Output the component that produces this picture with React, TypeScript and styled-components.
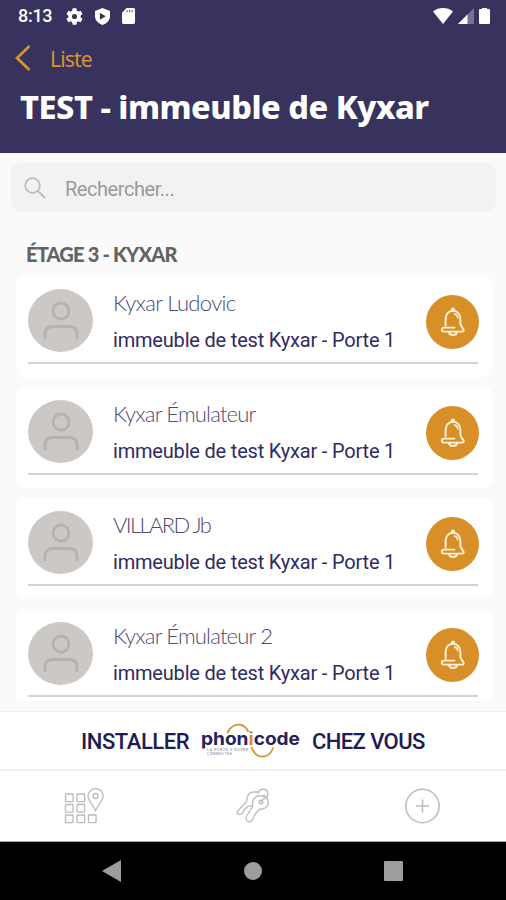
import React from "react";
import styled, { createGlobalStyle } from "styled-components";

const GlobalStyle = createGlobalStyle`
  * { box-sizing: border-box; }
  body { margin: 0; background: #fafafa; }
`;

const Screen = styled.div`
  width: 506px;
  height: 900px;
  display: flex;
  flex-direction: column;
  overflow: hidden;
  background: #fafafa;
  font-family: Roboto, "Liberation Sans", sans-serif;
`;

const Header = styled.header`
  flex: none;
  height: 153px;
  background: #37335e;
  color: #fff;
`;

const StatusBar = styled.div`
  height: 32px;
  padding: 0 16px 0 18px;
  display: flex;
  align-items: center;
  justify-content: space-between;
`;

const StatusGroup = styled.div<{ $gap: number }>`
  display: flex;
  align-items: center;
  gap: ${(p) => p.$gap}px;
`;

const Clock = styled.span`
  width: 36px;
  font-size: 18px;
  font-weight: 500;
  letter-spacing: -0.3px;
  line-height: 20px;
`;

const BackRow = styled.div`
  height: 52px;
  padding-left: 15px;
  display: flex;
  align-items: center;
  gap: 19px;
  color: #d8922f;
`;

const BackLabel = styled.span`
  padding-top: 1px;
  font: 400 21px/28px "Noto Sans", sans-serif;
  letter-spacing: -0.8px;
`;

const Title = styled.h1`
  margin: 0;
  padding: 3px 0 0 20px;
  font: 800 32.5px/40px "Noto Sans", sans-serif;
  letter-spacing: -0.47px;
  white-space: nowrap;
`;

const SearchBox = styled.label`
  flex: none;
  height: 49px;
  margin: 10px 10px 0 11px;
  padding: 0 13px;
  display: flex;
  align-items: center;
  gap: 19px;
  border-radius: 10px;
  background: #f2f2f2;
`;

const SearchText = styled.span`
  padding-top: 2px;
  font-size: 20px;
  line-height: 26px;
  letter-spacing: -0.45px;
  color: #9a9a9a;
`;

const SectionTitle = styled.h2`
  flex: none;
  margin: 0;
  height: 64px;
  padding: 28px 0 0 26px;
  font: 900 20px/28px Lato, sans-serif;
  letter-spacing: -0.8px;
  color: #636363;
  white-space: nowrap;
`;

const List = styled.div`
  flex: none;
  height: 435px;
  padding: 0 14px 10px 16px;
  display: flex;
  flex-direction: column;
`;

const Clip = styled.div`
  height: 425px;
  overflow: hidden;
  display: flex;
  flex-direction: column;
  gap: 10px;
`;

const Card = styled.article`
  flex: none;
  height: 101px;
  padding: 0 14px 0 12px;
  border-radius: 8px;
  background: #fff;
`;

const CardBody = styled.div`
  height: 88px;
  display: flex;
  align-items: center;
  border-bottom: 2px solid #d3d3d3;
`;

const Avatar = styled.div`
  flex: none;
  width: 65px;
  height: 63px;
  margin: 2px 20px 0 0;
  border-radius: 50%;
  background: #cbc8c6;
  display: flex;
  justify-content: center;
`;

const Details = styled.div`
  flex: 1;
  min-width: 0;
  padding-top: 4px;
  color: #302b62;
  white-space: nowrap;
`;

const Name = styled.div<{ $spacing: number }>`
  font: 300 22px/30px Lato, sans-serif;
  letter-spacing: ${(p) => p.$spacing}px;
  color: #4f4b70;
`;

const Address = styled.div`
  margin-top: 7px;
  font-size: 20px;
  line-height: 30px;
  letter-spacing: -0.19px;
`;

const BellButton = styled.button`
  flex: none;
  width: 53px;
  height: 54px;
  margin: 5px -1px 0 0;
  padding: 0;
  border: 0;
  border-radius: 50%;
  background: #d98f27;
  display: flex;
  align-items: center;
  justify-content: center;
`;

const Banner = styled.div`
  flex: none;
  height: 58px;
  padding: 1px 0 0 81px;
  display: flex;
  align-items: center;
  border-top: 1px solid #eeeeee;
  background: #fff;
  color: #211b55;
  white-space: nowrap;
`;

const BannerWord = styled.span<{ $width: number; $indent?: number; $spacing: number }>`
  width: ${(p) => p.$width}px;
  padding: 1px 0 0 ${(p) => p.$indent ?? 0}px;
  font-size: 22px;
  line-height: 30px;
  font-weight: 500;
  letter-spacing: ${(p) => p.$spacing}px;
`;

const TabBar = styled.nav`
  flex: none;
  height: 73px;
  display: grid;
  grid-template-columns: repeat(3, 1fr);
  align-items: center;
  justify-items: center;
  border-top: 2px solid #f1f1f1;
  border-bottom: 1px solid #a8a8a8;
  background: #fff;
`;

const SystemBar = styled.div`
  flex: 1;
  padding: 0 103px 0 102px;
  display: flex;
  align-items: center;
  justify-content: space-between;
  background: #000;
`;

const people = [
  { name: "Kyxar Ludovic", spacing: -0.65 },
  { name: "Kyxar Émulateur", spacing: -0.8 },
  { name: "VILLARD Jb", spacing: -1.6 },
  { name: "Kyxar Émulateur 2", spacing: -0.8 },
];

const GearIcon = () => (
  <svg width="17" height="17" viewBox="2 2 20 20" fill="#fff">
    <path d="M19.14 12.94c.04-.3.06-.61.06-.94s-.02-.64-.07-.94l2.03-1.58a.49.49 0 0 0 .12-.61l-1.92-3.32a.49.49 0 0 0-.59-.22l-2.39.96a7 7 0 0 0-1.62-.94l-.36-2.54a.48.48 0 0 0-.48-.41h-3.84a.47.47 0 0 0-.47.41l-.36 2.54c-.59.24-1.13.57-1.62.94l-2.39-.96a.48.48 0 0 0-.59.22L2.74 8.87a.47.47 0 0 0 .12.61l2.03 1.58a7.5 7.5 0 0 0 0 1.88l-2.03 1.58a.49.49 0 0 0-.12.61l1.92 3.32c.12.22.37.29.59.22l2.39-.96c.5.38 1.03.7 1.62.94l.36 2.54c.05.24.24.41.48.41h3.84c.24 0 .44-.17.47-.41l.36-2.54a7 7 0 0 0 1.62-.94l2.39.96c.22.08.47 0 .59-.22l1.92-3.32a.47.47 0 0 0-.12-.61zM12 15a3 3 0 1 1 0-6 3 3 0 0 1 0 6z" />
  </svg>
);

const ShieldIcon = () => (
  <svg width="15" height="17" viewBox="0 0 16 18">
    <path d="M8 0l8 3v5.5c0 4.3-3.2 8-8 9.5-4.8-1.5-8-5.2-8-9.5V3z" fill="#fff" />
    <path d="M5.2 5v7.4L11.4 8.7z" fill="#37335e" />
  </svg>
);

const CardIcon = () => (
  <svg width="13" height="16" viewBox="0 0 14 17">
    <path d="M5 0h7.5A1.5 1.5 0 0 1 14 1.5v14a1.5 1.5 0 0 1-1.5 1.5h-11A1.5 1.5 0 0 1 0 15.5V5z" fill="#fff" />
    <path d="M5.5 2v2.5M8.2 2v2.5M10.9 2v2.5" stroke="#716e8c" strokeWidth="1.3" />
  </svg>
);

const WifiIcon = () => (
  <svg width="20" height="16" viewBox="0 0 20 16">
    <path d="M0 3.5C5.5-1.1 14.5-1.1 20 3.5L10 16z" fill="#fff" />
  </svg>
);

const SignalIcon = () => (
  <svg width="16" height="16" viewBox="0 0 16 16">
    <path d="M16 0v16H0z" fill="#77748f" />
    <path d="M9.5 6.5V16H0z" fill="#fff" />
  </svg>
);

const BatteryIcon = () => (
  <svg width="11" height="16" viewBox="0 0 11 16">
    <path d="M3 1V0h5v1h2a1 1 0 0 1 1 1v13a1 1 0 0 1-1 1H1a1 1 0 0 1-1-1V2a1 1 0 0 1 1-1z" fill="#fff" />
  </svg>
);

const BackIcon = () => (
  <svg width="16" height="26" viewBox="0 0 16 26" fill="none">
    <path d="M14.5 1L2 13l12.5 12" stroke="#d8922f" strokeWidth="2.8" />
  </svg>
);

const SearchIcon = () => (
  <svg width="22" height="22" viewBox="0 0 22 22" fill="none" stroke="#bdbdbd">
    <circle cx="8.5" cy="8.5" r="7.3" strokeWidth="1.8" />
    <path d="M13.7 13.7L21 21" strokeWidth="2.2" />
  </svg>
);

const PersonIcon = () => (
  <svg width="36" height="63" viewBox="0 0 36 63" fill="none" stroke="#b5b2b0" strokeWidth="2.8">
    <circle cx="18" cy="22" r="8" />
    <path d="M2 50v-5c0-5 3-7.5 8-7.5h16c5 0 8 2.5 8 7.5v5" />
  </svg>
);

const BellIcon = () => (
  <svg width="26" height="30" viewBox="0 0 26 30" fill="none" stroke="#fff2da" strokeWidth="1.9" strokeLinecap="round" strokeLinejoin="round">
    <circle cx="13" cy="2.6" r="1.2" />
    <path d="M5.6 18.500V12c0-4.700 3-8.200 7.400-8.200s7.400 3.500 7.400 8.200v5.500l3 5c.7 1.300.2 2.100-1.200 2.100H3.800c-2.500 0-2.700-3.500-.3-4h11" />
    <path d="M9 25.200c.7 3.700 7.300 3.700 8 0" />
    <path d="M14.500 6.900c2.200.5 3.200 1.900 3.400 4" strokeWidth="1.5" />
  </svg>
);

const PhonicodeLogo = () => (
  <svg width="102" height="42" viewBox="0 0 102 42">
    <path d="M27.300 13C32.500 2 44 2 48.500 11.800" fill="none" stroke="#da8f2e" strokeWidth="1.900" />
    <path d="M51.500 27C56 40 69 39.500 73.300 27.500" fill="none" stroke="#da8f2e" strokeWidth="1.700" />
    <text x="1" y="25" textLength="99" lengthAdjust="spacingAndGlyphs" fontFamily="Inter, sans-serif" fontSize="18" fontWeight="700" fill="#26205b">
      phon<tspan fill="#da8f2e">i</tspan>code
    </text>
    <text x="7" y="31" textLength="41" fontFamily="Roboto, sans-serif" fontSize="3.600" fill="#77758d">LA PORTE S'OUVRE</text>
    <text x="7" y="35" textLength="25" fontFamily="Roboto, sans-serif" fontSize="3.600" fill="#77758d">CONNECTÉE</text>
  </svg>
);

const PlacesIcon = () => (
  <svg width="40" height="36" viewBox="0 0 40 36" fill="none" stroke="#bdb9b9" strokeWidth="1.3">
    {[
      [1.5, 6], [13, 6], [1.5, 16.5], [13, 16.5], [1.5, 27], [13, 27], [24.5, 27],
    ].map(([x, y]) => (
      <rect key={`${x}-${y}`} x={x} y={y} width="7.6" height="7.6" rx="0.5" />
    ))}
    <path d="M31.500 22.500C29.500 17.500 24 12.500 24 8.300a7.600 7.600 0 0 1 15.200 0c0 4.200-5.700 9.200-7.700 14.200z" />
    <circle cx="31.5" cy="8" r="2.5" />
  </svg>
);

const KeysIcon = () => (
  <svg width="36" height="36" viewBox="0 0 36 36" fill="none" stroke="#c0bebe" strokeWidth="1.4" strokeLinecap="round" strokeLinejoin="round">
    <path d="M23.500 4H19c-4 0-6.800 2.800-6.700 6.200.1 2-.4 3.100-2 4.800l-7.500 7.700c-1.100 1.100-1 2.800.3 3.500 1.600.8 3.700-.1 4.600-1.500l1.500-3.300 4-3 4-1" />
    <path d="M25 7.800c-5 .3-8.200 4-7.400 8.200.3 1.800-.1 3-1.300 4.500l-4.400 7c-1.400 2.200-.8 4.600 1 5.700 1.900 1.100 4.200.2 4.900-1.900l2-4.600 3.300-4.100c.9-1.100 1.800-1.500 3.300-1.600 4.900-.3 8.200-4 6.700-8.300-1-3.300-4-5.200-8.100-4.900z" />
    <circle cx="26" cy="14" r="1.8" />
    <path d="M23.500 5.500c.7-5.700 9.200-5.500 9.300.1.100 2.300-.9 4-2.500 5.200M26 13.500c2.400-1.700 3.800-4 3.200-6.500" />
  </svg>
);

const AddIcon = () => (
  <svg width="36" height="36" viewBox="0 0 36 36" fill="none" stroke="#bdbcbc">
    <circle cx="18.500" cy="18" r="16.700" strokeWidth="1.500" />
    <path d="M18.500 11.500v13M12 18h13" strokeWidth="1.500" />
  </svg>
);

export default function App() {
  return (
    <Screen>
      <GlobalStyle />
      <Header>
        <StatusBar>
          <StatusGroup $gap={12}>
            <Clock>8:13</Clock>
            <GearIcon />
            <ShieldIcon />
            <CardIcon />
          </StatusGroup>
          <StatusGroup $gap={5}>
            <WifiIcon />
            <SignalIcon />
            <BatteryIcon />
          </StatusGroup>
        </StatusBar>
        <BackRow>
          <BackIcon />
          <BackLabel>Liste</BackLabel>
        </BackRow>
        <Title>TEST - immeuble de Kyxar</Title>
      </Header>
      <SearchBox>
        <SearchIcon />
        <SearchText>Rechercher...</SearchText>
      </SearchBox>
      <SectionTitle>ÉTAGE 3 - KYXAR</SectionTitle>
      <List>
        <Clip>
          {people.map((person) => (
            <Card key={person.name}>
              <CardBody>
                <Avatar>
                  <PersonIcon />
                </Avatar>
                <Details>
                  <Name $spacing={person.spacing}>{person.name}</Name>
                  <Address>immeuble de test Kyxar - Porte 1</Address>
                </Details>
                <BellButton aria-label="Sonner">
                  <BellIcon />
                </BellButton>
              </CardBody>
            </Card>
          ))}
        </Clip>
      </List>
      <Banner>
        <BannerWord $width={119} $spacing={-0.45}>INSTALLER</BannerWord>
        <PhonicodeLogo />
        <BannerWord $width={130} $indent={10} $spacing={-0.6}>CHEZ VOUS</BannerWord>
      </Banner>
      <TabBar>
        <PlacesIcon />
        <KeysIcon />
        <AddIcon />
      </TabBar>
      <SystemBar>
        <svg width="19" height="22" viewBox="0 0 19 22"><path d="M19 0v22L0 11z" fill="#9d9d9d" /></svg>
        <svg width="18" height="18" viewBox="0 0 18 18"><circle cx="9" cy="9" r="9" fill="#9d9d9d" /></svg>
        <svg width="19" height="20" viewBox="0 0 19 20"><rect width="19" height="20" rx="1" fill="#9d9d9d" /></svg>
      </SystemBar>
    </Screen>
  );
}
